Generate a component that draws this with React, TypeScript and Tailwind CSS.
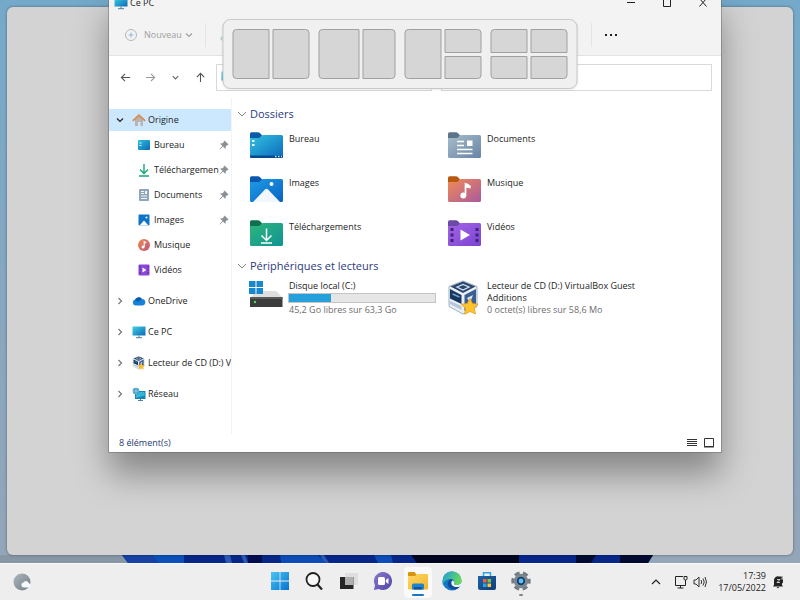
import type { ReactNode } from "react";

type SvgProps = { children: ReactNode; box: string; className: string };

function Svg({ children, box, className }: SvgProps) {
  return (
    <svg viewBox={box} className={`shrink-0 ${className}`} fill="none" aria-hidden="true">
      {children}
    </svg>
  );
}

function Gradient({ id, from, to }: { id: string; from: string; to: string }) {
  return (
    <linearGradient id={id} x1="0" y1="0" x2="1" y2="1">
      <stop offset="0" stopColor={from} />
      <stop offset="1" stopColor={to} />
    </linearGradient>
  );
}

function Folder({ id, tab, from, to, children }: { id: string; tab: string; from: string; to: string; children: ReactNode }) {
  return (
    <Svg box="0 0 34 28" className="h-7 w-[34px]">
      <Gradient id={id} from={from} to={to} />
      <path d="M1 1.700Q1 .2 2.500.2H9q1 0 1.800.8L13 3.200v5H1Z" fill={tab} />
      <path d="M1 6h8.500q1 0 1.700-.8l1.400-1.400q.7-.7 1.700-.7h18.200q1.500 0 1.500 1.500v20q0 1.500-1.500 1.500h-30Q1 26.100 1 24.600Z" fill={`url(#${id})`} />
      {children}
    </Svg>
  );
}

const folders = [
  {
    name: "Bureau",
    icon: (
      <Folder id="f-desk" tab="#0a5aa8" from="#35c3e0" to="#0a68bd">
        <path d="M1 23.500h33v1q0 1.600-1.500 1.600h-30Q1 26.100 1 24.500Z" fill="#084a8c" />
        <path d="M3 9h2.500M3 13h2.500" stroke="#e8fbff" strokeWidth="2" />
        <path d="M26 24.500h1.500M29 24.500h1.500M32 24.500h1" stroke="#bfe4ff" strokeWidth="1.500" />
      </Folder>
    ),
  },
  {
    name: "Documents",
    icon: (
      <Folder id="f-doc" tab="#5c7488" from="#a9bccb" to="#6685a5">
        <path d="M10 9.500h7M10 13.500h7M10 17.500h15.500M10 21.500h15.500" stroke="#fff" strokeWidth="1.600" />
        <path d="M20 8.500h5.500v5.500H20Z" fill="#fff" />
      </Folder>
    ),
  },
  {
    name: "Images",
    icon: (
      <Folder id="f-img" tab="#0b58ac" from="#1e9be8" to="#0a63c0">
        <path d="m4 26 12-12.500q1.500-1.500 3 0L31 26Z" fill="#f1f7fd" />
        <circle cx="22.500" cy="8" r="2" fill="#f1f7fd" />
      </Folder>
    ),
  },
  {
    name: "Musique",
    icon: (
      <Folder id="f-mus" tab="#b8590e" from="#f18b57" to="#a95a9c">
        <circle cx="16.300" cy="19.500" r="2.900" fill="#fff" />
        <path d="M18.500 19.500V8l5 3" stroke="#fff" strokeWidth="1.700" />
        <path d="M18 7.500h2.500l3 2.500v2.500l-5-1Z" fill="#fff" />
      </Folder>
    ),
  },
  {
    name: "Téléchargements",
    icon: (
      <Folder id="f-dl" tab="#0f6f4f" from="#2fb57c" to="#0f9494">
        <path d="M17.500 8.500V20M12.500 15.500l5 5 5-5M12 23h11" stroke="#fff" strokeWidth="1.500" />
      </Folder>
    ),
  },
  {
    name: "Vidéos",
    icon: (
      <Folder id="f-vid" tab="#6a4aa5" from="#a463e6" to="#7c44d2">
        <path d="M3.500 9.500h3M3.500 15h3M3.500 20.500h3M28.500 9.500h3M28.500 15h3M28.500 20.500h3" stroke="#3f2472" strokeWidth="3" />
        <path d="m13.500 9.500 9.500 5.500-9.500 5.500Z" fill="#fff" />
      </Folder>
    ),
  },
];

function Monitor() {
  return (
    <Svg box="0 0 14 14" className="size-[14px]">
      <Gradient id="monitor" from="#3ed2e4" to="#0e69b4" />
      <path d="M.5 1.500h13v9H.5Z" fill="url(#monitor)" />
      <path d="M7 10.500v2M4 12.700h6" stroke="#4d7da1" />
    </Svg>
  );
}

function VirtualBox({ className }: { className: string }) {
  return (
    <Svg box="0 0 34 36" className={className}>
      <path d="m16 1 14 5.500v20L16 34 2 26.500v-20Z" fill="#eaf0f6" stroke="#9db0c4" />
      <path d="m16 1.500 12.500 5L16 13 3.500 6.500Z" fill="#2a476f" />
      <path d="m10 7 6-2.500L22 7l-6 3Z" stroke="#d5e1ee" strokeWidth="1.300" />
      <path d="m3 9 11.500 6v9L3 18.500Z" fill="#17365f" />
      <path d="m5.500 14 7 3" stroke="#7d9fc5" strokeWidth="1.500" />
      <path d="M17.500 15 29 9v16l-11.500 6Z" fill="#385f91" />
      <path d="m20 18 6-3-3 8Z" fill="#dce7f2" />
      <path d="m3 21 11.500 5v4L3 24Z" fill="#b7c6d5" />
      <path d="m23 18.500 2.600 5 5.400.5-3.700 4.200 1.200 5.800-5.500-2.500-5.300 2.800.8-6.100-4.200-3.900 5.900-.9Z" fill="#ffc32d" stroke="#e4961a" strokeWidth=".7" />
    </Svg>
  );
}

const quickAccess = [
  {
    name: "Bureau",
    pinned: true,
    icon: (
      <Svg box="0 0 14 14" className="size-[14px]">
        <Gradient id="desk" from="#2fc0dc" to="#0b69b8" />
        <rect x="1" y="2" width="12" height="10" rx="1" fill="url(#desk)" />
        <path d="M2.500 5h2M2.500 7.500h2" stroke="#dff8ff" />
      </Svg>
    ),
  },
  {
    name: "Téléchargements",
    pinned: true,
    icon: (
      <Svg box="0 0 14 14" className="size-[14px]">
        <path d="M7 1v9M3 6.500l4 4 4-4M2 13h10" stroke="#14a57b" strokeWidth="1.400" />
      </Svg>
    ),
  },
  {
    name: "Documents",
    pinned: true,
    icon: (
      <Svg box="0 0 14 14" className="size-[14px]">
        <rect x="2" y="1" width="10" height="12" rx="1" fill="#8fa5ba" />
        <path d="M4 3.500h3M4 5.500h3M4 8h6M4 10.500h6" stroke="#f2f6fa" />
        <path d="M8 3h2v3H8Z" fill="#f2f6fa" />
      </Svg>
    ),
  },
  {
    name: "Images",
    pinned: true,
    icon: (
      <Svg box="0 0 14 14" className="size-[14px]">
        <rect x="1.500" y="1.500" width="11" height="11" rx="1" fill="#0f74c6" />
        <path d="m2.500 12.500 4.500-5 4.500 5Z" fill="#fff" />
        <circle cx="9.500" cy="4.500" r="1" fill="#fff" />
      </Svg>
    ),
  },
  {
    name: "Musique",
    pinned: false,
    icon: (
      <Svg box="0 0 14 14" className="size-[14px]">
        <Gradient id="music" from="#f08a4e" to="#b9557f" />
        <circle cx="7" cy="7" r="6" fill="url(#music)" />
        <circle cx="6" cy="9" r="1.500" fill="#fff" />
        <path d="M7.200 9V3.500l2 1.500" stroke="#fff" strokeWidth="1.100" />
      </Svg>
    ),
  },
  {
    name: "Vidéos",
    pinned: false,
    icon: (
      <Svg box="0 0 14 14" className="size-[14px]">
        <rect x="1.500" y="1.500" width="11" height="11" rx="1" fill="#8b48d8" />
        <path d="M3 3v8.500M11 3v8.500" stroke="#4a2385" strokeDasharray="1.500 1.500" />
        <path d="m5.500 4.500 4 2.500-4 2.500Z" fill="#fff" />
      </Svg>
    ),
  },
];

const roots = [
  {
    name: "OneDrive",
    icon: (
      <Svg box="0 0 14 14" className="size-[14px]">
        <path d="M3.500 11.500a3 3 0 0 1-.4-5.900A4 4 0 0 1 10 5a3.300 3.300 0 0 1 .8 6.500Z" fill="#1482d8" />
        <path d="M3 6a4 4 0 0 1 7-1L6 8Z" fill="#0a5cad" />
      </Svg>
    ),
  },
  { name: "Ce PC", icon: <Monitor /> },
  { name: "Lecteur de CD (D:) VirtualBox Guest Additions", icon: <VirtualBox className="size-[14px]" /> },
  {
    name: "Réseau",
    icon: (
      <Svg box="0 0 14 14" className="size-[14px]">
        <path d="M3 4h10.500v8H3Z" fill="#1683b9" />
        <path d="M4 5h8.500v3.500L4 11Z" fill="#36b6d5" />
        <path d="M8.500 12v1.500M6 13.500h5" stroke="#4d7da1" />
        <circle cx="4" cy="4" r="3.300" fill="#4a9fc8" />
        <path d="M1 4h6M4 1v6" stroke="#a5d6e8" strokeWidth=".7" />
      </Svg>
    ),
  },
];

function Chevron({ d, className }: { d: string; className: string }) {
  return (
    <Svg box="0 0 10 10" className={`size-[10px] ${className}`}>
      <path d={d} stroke="currentColor" strokeWidth="1.200" />
    </Svg>
  );
}

const DOWN = "m2 3.500 3 3 3-3";
const RIGHT = "m3.500 2 3 3-3 3";
const UP = "m1 7 4-4 4 4";

function Pin() {
  return (
    <Svg box="0 0 10 10" className="size-[10px]">
      <path d="m5.500.8 3.700 3.700-1.200.4-1.500 1.500-.3 2L4 6.200.8 9.200 3.800 6 1.600 3.800l2-.3L5.100 2Z" fill="#8a9096" stroke="#8a9096" strokeWidth=".6" />
    </Svg>
  );
}

function Sidebar() {
  return (
    <nav className="w-[123px] shrink-0 overflow-hidden border-r border-[#f1f4f7] pt-[11px]">
      <ul className="flex w-[122px] flex-col gap-[9px]">
        <li>
          <button className="flex h-[22px] w-full items-center bg-[#cce8ff] pl-1.5">
            <Chevron d={DOWN} className="mr-[7px] text-[#222]" />
            <Svg box="0 0 14 14" className="size-[14px]">
              <path d="M3 6v7h3V9h2.500v4H11V6L7 2.500Z" fill="#b9b4b1" />
              <path d="M.8 7.800 7 2.200l6.200 5.600" stroke="#d98a4e" strokeWidth="1.800" />
            </Svg>
            <span className="ml-0.5">Origine</span>
          </button>
          <ul className="mt-[3px] flex flex-col gap-[3px]">
            {quickAccess.map((item) => (
              <li key={item.name}>
                <button className="flex h-[22px] w-full items-center pl-7">
                  {item.icon}
                  <span className="ml-[3px] min-w-0 flex-1 overflow-hidden text-left whitespace-nowrap">{item.name}</span>
                  <span className="flex w-3 shrink-0 items-center">{item.pinned && <Pin />}</span>
                </button>
              </li>
            ))}
          </ul>
        </li>
        {roots.map((item) => (
          <li key={item.name}>
            <button className="flex h-[22px] w-full items-center overflow-hidden pl-1.5 whitespace-nowrap">
              <Chevron d={RIGHT} className="mr-[7px] text-[#777]" />
              {item.icon}
              <span className="ml-0.5">{item.name}</span>
            </button>
          </li>
        ))}
      </ul>
    </nav>
  );
}

function GroupHeading({ children }: { children: ReactNode }) {
  return (
    <h2>
      <button className="flex h-4 items-center gap-[3px] text-[11px] text-[#2b3a80]">
        <Svg box="0 0 10 10" className="size-[10px]">
          <path d="m1 3 4 4 4-4" stroke="#888" />
        </Svg>
        {children}
      </button>
    </h2>
  );
}

function Content() {
  return (
    <section className="min-w-0 flex-1 overflow-hidden pt-2 pl-[5px]">
      <GroupHeading>Dossiers</GroupHeading>
      <div className="mt-[10px] grid grid-cols-[repeat(auto-fill,192px)] gap-x-1.5 gap-y-4 pl-3">
        {folders.map((folder) => (
          <a key={folder.name} href="#" className="flex gap-1.5">
            {folder.icon}
            <span className="mt-px leading-3">{folder.name}</span>
          </a>
        ))}
      </div>
      <div className="mt-[10px]">
        <GroupHeading>Périphériques et lecteurs</GroupHeading>
      </div>
      <div className="mt-1.5 grid grid-cols-[repeat(auto-fill,192px)] gap-x-1.5 pl-3 leading-3">
        <a href="#" className="flex gap-[5px] pr-[5px]">
          <Svg box="0 0 34 28" className="h-7 w-[34px]">
            <path d="M8 11h19l6 6H2Z" fill="#dedede" />
            <path d="M1 17h32.500v10H1Z" fill="#3c3c3c" />
            <path d="M1 17h32.500v2H1Z" fill="#595959" />
            <circle cx="6" cy="22" r="1.200" fill="#40e05a" />
            <path d="M0 1h6.500v6H0ZM7.500 1H14v6H7.500ZM0 8h6.500v6H0ZM7.500 8H14v6H7.500Z" fill="#1787cf" />
          </Svg>
          <span className="flex flex-1 flex-col">
            <span className="pl-px">Disque local (C:)</span>
            <span className="my-px h-[10px] border border-[#c4c4c4] bg-[#e6e6e6]">
              <span className="block h-full w-[29%] bg-[#26a0da]" />
            </span>
            <span className="pl-px text-[#6d6d6d]">45,2 Go libres sur 63,3 Go</span>
          </span>
        </a>
        <a href="#" className="flex gap-1.5">
          <VirtualBox className="h-9 w-[34px]" />
          <span className="flex flex-1 flex-col">
            <span>Lecteur de CD (D:) VirtualBox Guest Additions</span>
            <span className="text-[#6d6d6d]">0 octet(s) libres sur 58,6 Mo</span>
          </span>
        </a>
      </div>
    </section>
  );
}

function ExplorerWindow() {
  return (
    <div className="absolute -top-2 right-[79px] bottom-[111px] left-[109px] flex flex-col bg-white shadow-[0_0_0_1px_rgba(90,90,90,0.4),0_22px_32px_rgba(0,0,0,0.36)]">
      <header className="flex h-[22px] shrink-0 items-center bg-[#f3f3f3] pl-[5px]">
        <Monitor />
        <h1 className="ml-0.5 flex-1">Ce PC</h1>
        <button aria-label="Réduire" className="flex h-full w-9 items-center justify-center">
          <Svg box="0 0 10 10" className="size-[10px]">
            <path d="M1 4.500h8" stroke="#222" />
          </Svg>
        </button>
        <button aria-label="Agrandir" className="flex h-full w-9 items-center justify-center">
          <Svg box="0 0 10 10" className="size-[10px]">
            <path d="M1.500.5h7v8h-7Z" stroke="#222" />
          </Svg>
        </button>
        <button aria-label="Fermer" className="flex h-full w-9 items-center justify-center">
          <Svg box="0 0 10 10" className="size-[10px]">
            <path d="m1.500.5 7 8M8.500.5l-7 8" stroke="#222" />
          </Svg>
        </button>
      </header>
      <div className="flex h-[42px] shrink-0 items-center border-b border-[#e3e3e3] bg-[#f3f3f3] pt-px pl-[15px] text-[#a0a0a0]">
        <button disabled className="flex items-center gap-1.5">
          <Svg box="0 0 14 14" className="size-[14px]">
            <circle cx="7" cy="7" r="5.500" stroke="#b4b8bc" />
            <path d="M7 4.500v5M4.500 7h5" stroke="#8fbbdc" />
          </Svg>
          Nouveau
          <Chevron d={DOWN} className="-ml-1" />
        </button>
        <span className="ml-[11px] h-6 w-px bg-[#e4e4e4]" />
        <button disabled aria-label="Couper" className="ml-[14px]">
          <Svg box="0 0 10 14" className="h-[14px] w-[10px]">
            <path d="M3 1.500 6 9M7 1.500 4 9" stroke="#b4b8bc" />
            <circle cx="2.500" cy="10.500" r="1.500" stroke="#9bb8cc" />
            <circle cx="7.500" cy="10.500" r="1.500" stroke="#9bb8cc" />
          </Svg>
        </button>
        <span className="ml-auto h-6 w-px bg-[#e4e4e4]" />
        <button aria-label="Voir plus" className="mr-[102px] ml-[11px]">
          <Svg box="0 0 14 4" className="h-1 w-4">
            <path d="M1 1h2v2H1ZM6 1h2v2H6ZM11 1h2v2h-2Z" fill="#222" />
          </Svg>
        </button>
      </div>
      <div className="flex h-[42px] shrink-0 items-center gap-px pr-[9px] pl-1">
        {[
          ["Précédent", "M11 6H1.500M5.500 2l-4 4 4 4", "text-[#555]"],
          ["Suivant", "M1 6h9.500M6.500 2l4 4-4 4", "text-[#999]"],
          ["Emplacements récents", "m3 4.500 3 3 3-3", "text-[#666]"],
          ["Dossier parent", "M6 11V1.500M2 5.500l4-4 4 4", "text-[#555]"],
        ].map(([label, d, color]) => (
          <button key={label} aria-label={label} className={`flex w-6 justify-center ${color}`}>
            <Svg box="0 0 12 12" className="size-[11px]">
              <path d={d} stroke="currentColor" strokeWidth="1.200" />
            </Svg>
          </button>
        ))}
        <div className="ml-[3px] flex min-w-0 flex-1 gap-[9px]">
          <div className="flex h-[27px] min-w-0 flex-[5] items-center border border-[#d9d9d9] pl-1">
            <Monitor />
            <input aria-label="Adresse" className="min-w-0 flex-1 outline-none" />
          </div>
          <input aria-label="Rechercher" className="h-[27px] min-w-0 flex-[6] border border-[#d9d9d9] px-2 outline-none" />
        </div>
      </div>
      <div className="flex min-h-0 flex-1">
        <Sidebar />
        <Content />
      </div>
      <footer className="flex h-[18px] shrink-0 items-center pr-1.5 pl-[10px] text-[#25396b]">
        <span className="flex-1">8 élément(s)</span>
        <button aria-label="Détails" className="mr-[5px]">
          <Svg box="0 0 12 12" className="size-3">
            <path d="M1 2.500h10M1 4.500h10M1 6.500h10M1 8.500h10" stroke="#333" />
          </Svg>
        </button>
        <button aria-label="Grandes icônes">
          <Svg box="0 0 12 12" className="size-3">
            <path d="M1.500 1.500h9v8h-9ZM1 10h10" stroke="#333" />
          </Svg>
        </button>
      </footer>
    </div>
  );
}

const zone = "border border-[#a0a0a0] bg-[#d6d6d6] hover:bg-[#c8c8c8]";

function SnapBar() {
  return (
    <div className="absolute top-[19px] left-1/2 flex h-[70px] w-[355px] -translate-x-1/2 justify-between rounded-lg border border-[#c8c8c8] bg-[#f0f0f0] p-[9px] shadow-[0_1px_2px_rgba(0,0,0,0.08)]">
      <div className="grid w-[77px] grid-cols-2 gap-[3px]">
        <button aria-label="Moitié gauche" className={`rounded-l ${zone}`} />
        <button aria-label="Moitié droite" className={`rounded-r ${zone}`} />
      </div>
      <div className="grid w-[77px] grid-cols-[5fr_4fr] gap-[3px]">
        <button aria-label="Grande zone gauche" className={`rounded-l ${zone}`} />
        <button aria-label="Petite zone droite" className={`rounded-r ${zone}`} />
      </div>
      <div className="grid w-[77px] grid-cols-2 grid-rows-2 gap-[3px]">
        <button aria-label="Gauche" className={`row-span-2 rounded-l ${zone}`} />
        <button aria-label="Haut droite" className={`rounded-tr ${zone}`} />
        <button aria-label="Bas droite" className={`rounded-br ${zone}`} />
      </div>
      <div className="grid w-[77px] grid-cols-2 grid-rows-2 gap-[3px]">
        <button aria-label="Quart haut gauche" className={`rounded-tl ${zone}`} />
        <button aria-label="Quart haut droite" className={`rounded-tr ${zone}`} />
        <button aria-label="Quart bas gauche" className={`rounded-bl ${zone}`} />
        <button aria-label="Quart bas droite" className={`rounded-br ${zone}`} />
      </div>
    </div>
  );
}

const apps = [
  {
    name: "Démarrer",
    icon: (
      <Svg box="0 0 20 20" className="size-5">
        <Gradient id="start" from="#48c6f3" to="#0773cf" />
        <path d="M1 1h8.600v8.600H1ZM10.400 1H19v8.600h-8.600ZM1 10.400h8.600V19H1ZM10.400 10.400H19V19h-8.600Z" fill="url(#start)" />
      </Svg>
    ),
  },
  {
    name: "Rechercher",
    icon: (
      <Svg box="0 0 20 20" className="size-5">
        <circle cx="9" cy="8.500" r="6.500" fill="#f8f8f8" stroke="#222" strokeWidth="1.800" />
        <path d="m13.500 13.500 4.500 5" stroke="#222" strokeWidth="2.200" />
      </Svg>
    ),
  },
  {
    name: "Vue des tâches",
    icon: (
      <Svg box="0 0 20 20" className="size-5">
        <path d="M6 2h13v12H6Z" fill="#dedede" />
        <path d="M1 6h13.500v12H1Z" fill="#262626" />
        <path d="M6 6h8.500v8H6Z" fill="#b0b0b0" />
      </Svg>
    ),
  },
  {
    name: "Conversation",
    icon: (
      <Svg box="0 0 20 20" className="size-5">
        <Gradient id="chat" from="#8c78c9" to="#4e46ab" />
        <path d="M10 1a9 9 0 1 1-4.300 16.900L1 19l1-4.700A9 9 0 0 1 10 1Z" fill="url(#chat)" />
        <rect x="5" y="6" width="7" height="8" rx="1.500" fill="#fff" />
        <path d="m12.800 9 2.700-2v6l-2.700-2Z" fill="#fff" />
      </Svg>
    ),
  },
  {
    name: "Explorateur de fichiers",
    mark: "w-3 bg-[#1a75c4]",
    icon: (
      <Svg box="0 0 20 20" className="size-5">
        <Gradient id="explorer" from="#ffd766" to="#f3b52a" />
        <path d="M0 2q0-1 1-1h5.500l2 2.500V7H0Z" fill="#d9930d" />
        <path d="M0 5h7l2-2h10q1 0 1 1v13.500q0 1-1 1H1q-1 0-1-1Z" fill="url(#explorer)" />
        <path d="M4 18.500V14q0-1.500 1.500-1.500h9q1.500 0 1.500 1.500v4.500Z" fill="#1c83cf" />
        <path d="M6 16h8v2.500H6Z" fill="#0c559b" />
      </Svg>
    ),
  },
  {
    name: "Microsoft Edge",
    icon: (
      <Svg box="0 0 20 20" className="size-5">
        <linearGradient id="edge" x1="0" y1="0" x2="1" y2=".4">
          <stop offset="0" stopColor="#1c9de0" />
          <stop offset="1" stopColor="#66d75c" />
        </linearGradient>
        <circle cx="10" cy="10" r="9.500" fill="#1477c9" />
        <path d="M.5 10a9.500 9.500 0 0 1 19-.5c0 3-2.500 4.500-5 4.500-2 0-3-.8-2.500-1.800.5-1 .4-4.200-3.200-4.200C4.500 8 2 10.500.5 14Z" fill="url(#edge)" />
        <path d="M8.200 8.500c-3.400 2-3.200 7.500.8 9.300 2.800 1.200 6.500.8 9-2.300 1-1.200.5-1.500-.6-1-3.200 1.300-7.400-.2-7.400-3.200 0-1.200.6-1.700.6-2.100-.2-.7-1.500-1.200-2.400-.7Z" fill="#114a9a" />
        <path d="M10.200 9.500c-1.700 2.300-.8 5.300 2.300 6.300 2.300.7 4.200.1 5.500-.3l2-1.500-1-2c-1 1.500-3 2-4.500 2-2 0-3-.8-2.500-1.800.4-.8.200-2.200-1.800-2.700Z" fill="#eef4fa" />
      </Svg>
    ),
  },
  {
    name: "Microsoft Store",
    icon: (
      <Svg box="0 0 20 20" className="size-5">
        <Gradient id="store" from="#1d63a8" to="#123d77" />
        <path d="M6.500 6V1.800h7V6" stroke="#35a3de" strokeWidth="1.500" />
        <path d="M1 5h18v12q0 2-2 2H3q-2 0-2-2Z" fill="url(#store)" />
        <path d="M6 8h3.500v3.500H6Z" fill="#f2603c" />
        <path d="M10.500 8H14v3.500h-3.500Z" fill="#82c341" />
        <path d="M6 12.500h3.500V16H6Z" fill="#2ba6e0" />
        <path d="M10.500 12.500H14V16h-3.500Z" fill="#ffc72c" />
      </Svg>
    ),
  },
  {
    name: "Paramètres",
    mark: "w-1 bg-[#858585]",
    icon: (
      <Svg box="0 0 20 20" className="size-5">
        <circle cx="10" cy="10" r="8" stroke="#737b83" strokeWidth="3.400" strokeDasharray="5 3.378" strokeDashoffset="2.500" />
        <circle cx="10" cy="10" r="6" fill="#8b939a" stroke="#7d858c" strokeWidth="2.400" />
        <circle cx="10" cy="10" r="4.200" fill="#0f3e70" />
        <circle cx="10" cy="10" r="2.400" fill="#5fc0f5" />
      </Svg>
    ),
  },
];

function Taskbar() {
  return (
    <footer className="grid h-[37px] shrink-0 grid-cols-[1fr_auto_1fr] items-center border-t border-[#f8f8f8] bg-[#eeeeee] text-[#222]">
      <button aria-label="Météo" className="ml-3 flex size-5 items-center justify-center">
        <Svg box="0 0 18 18" className="size-[18px]">
          <Gradient id="moon" from="#adb5bb" to="#737e88" />
          <circle cx="9" cy="9" r="8.500" fill="url(#moon)" />
          <path d="M10.500 14.500a2.500 2.500 0 0 1-.2-4.900 3 3 0 0 1 5.500.6 2.200 2.200 0 0 1-.3 4.300Z" fill="#f8fafb" />
        </Svg>
      </button>
      <div className="flex w-[271px] justify-between pl-px">
        {apps.map((app) => (
          <button
            key={app.name}
            aria-label={app.name}
            className={`flex h-[31px] w-7 flex-col items-center rounded pt-1 ${app.name === "Explorateur de fichiers" ? "bg-[#fafafa]" : ""}`}
          >
            {app.icon}
            {app.mark && <span className={`mt-[3px] h-0.5 rounded ${app.mark}`} />}
          </button>
        ))}
      </div>
      <div className="flex items-center justify-end pr-[15px]">
        <button aria-label="Icônes cachées" className="mr-[13px]">
          <Chevron d={UP} className="" />
        </button>
        <button aria-label="Réseau et son" className="mr-[11px] flex items-center gap-[5px]">
          <Svg box="0 0 14 14" className="size-[14px]">
            <path d="M9 1.500H1.500v9h10V7M6.500 10.500V13M3.500 13h6M11.500 5v2" stroke="#222" />
            <path d="M10 1.500h3V4q0 1-1.500 1T10 4Z" stroke="#222" />
          </Svg>
          <Svg box="0 0 14 14" className="size-[14px]">
            <path d="M1 5v4h2l3 3V2L3 5ZM8 5q1.500 2 0 4M10 3.500q2.500 3.500 0 7M12 2q3 5 0 10" stroke="#333" />
          </Svg>
        </button>
        <button className="flex flex-col items-end leading-3">
          <time>17:39</time>
          <time>17/05/2022</time>
        </button>
        <button aria-label="Notifications" className="ml-[5px]">
          <Svg box="0 0 14 14" className="size-[14px]">
            <path d="M3 10V5a4 4 0 0 1 5-3.500h4v6l-1 1V10l1 1.500H2ZM5.500 12.300h3q-1.500 1.700-3 0Z" fill="#222" />
            <path d="M6 4.500h3L6 7.500h3M10.500 2h2L10.500 4h2" stroke="#f4f4f4" strokeWidth=".8" />
          </Svg>
        </button>
      </div>
    </footer>
  );
}

export default function App() {
  return (
    <div className="flex h-screen flex-col overflow-hidden font-['Open_Sans','Noto_Sans',sans-serif] text-[9px] text-[#1c1c1c]">
      <main className="relative flex-1 overflow-hidden bg-linear-to-b from-[#75a9c9] to-[#94a5b8]">
        <svg viewBox="0 0 800 8" preserveAspectRatio="none" className="absolute bottom-0 h-2 w-full" aria-hidden="true">
          <path d="M0 0h122l6 8H0Z" fill="#8797a6" />
          <path d="M122 0h531l-5 8H128Z" fill="#06268a" />
          <path d="M122 0h30l6 8h-30Z" fill="#1741a4" />
          <path d="M152 0h32v8h-26Z" fill="#0a50bb" />
          <path d="M224 0h6l2 8h-6ZM241 0h4l3 8h-4ZM320 0h4l5 8h-5Z" fill="#2c59b6" />
          <path d="M248 0h14v8h-14Z" fill="#020c52" />
          <path d="M280 0h38l8 8h-45ZM374 0h17l2 8h-15Z" fill="#0c4bb8" />
          <path d="M411 0h108v8H417Z" fill="#02051f" />
          <path d="M576 0h20l-5 8h-15ZM620 0h33l-5 8h-28Z" fill="#030a32" />
        </svg>
        <div className="absolute inset-x-[7px] top-[7px] bottom-2 rounded-md bg-[#d3d3d3] shadow-[0_0_3px_rgba(0,0,0,0.4)]" />
        <ExplorerWindow />
        <SnapBar />
      </main>
      <Taskbar />
    </div>
  );
}
